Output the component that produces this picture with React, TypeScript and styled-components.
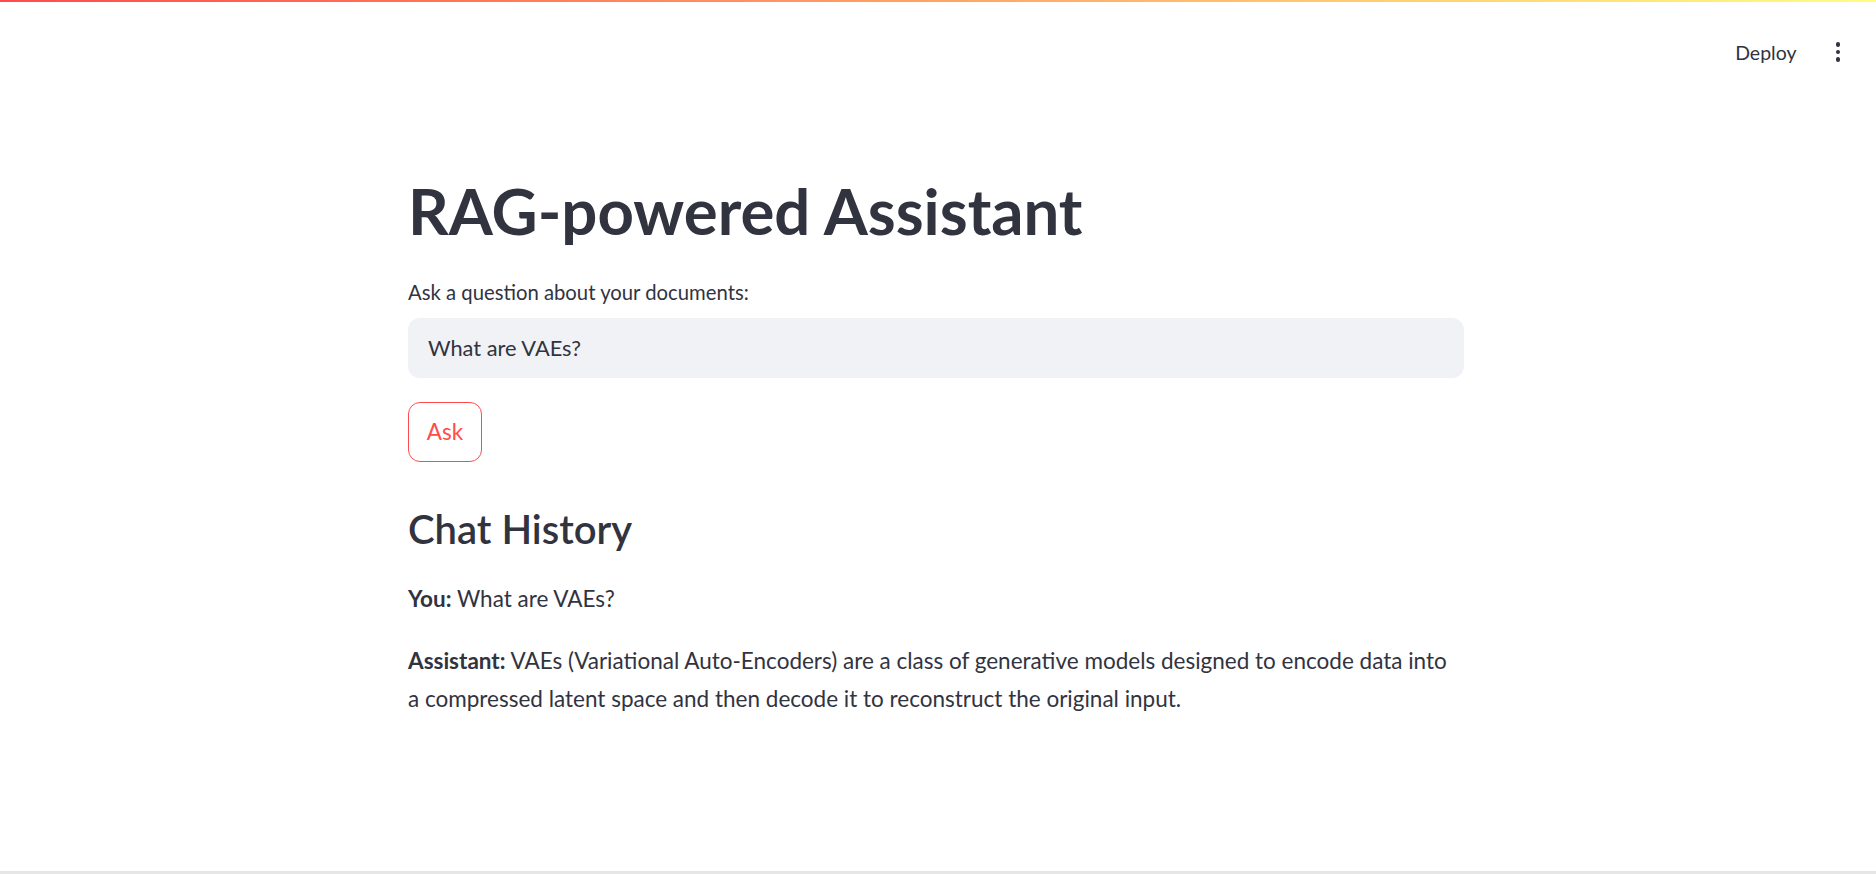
import React from "react";
import styled, { createGlobalStyle } from "styled-components";

const Global = createGlobalStyle`
  html, body { margin: 0; padding: 0; background: #ffffff; }
  body { font-family: Lato, "Noto Sans", sans-serif; color: #31333f; }
  * { box-sizing: border-box; }
`;

const Page = styled.div`
  position: relative;
  width: 100%;
  height: 874px;
  overflow: hidden;
  background: #ffffff;
  border-bottom: 3px solid #e6e6e6;
`;

const Decoration = styled.div`
  height: 2px;
  background: linear-gradient(90deg, rgb(255, 75, 75), rgb(255, 253, 128));
`;

const Header = styled.header`
  display: flex;
  justify-content: flex-end;
  align-items: center;
  gap: 39px;
  padding: 30px 36px 0 0;
  height: 70px;
`;

const DeployButton = styled.button`
  border: none;
  background: transparent;
  font-family: Lato, "Noto Sans", sans-serif;
  font-size: 19.5px;
  color: #31333f;
  padding: 0;
  cursor: pointer;
`;

const Kebab = styled.div`
  display: flex;
  flex-direction: column;
  gap: 3px;
  align-items: center;
`;

const Dot = styled.span`
  width: 4.5px;
  height: 4.5px;
  border-radius: 50%;
  background: #31333f;
`;

const Main = styled.main`
  width: 1056px;
  margin-left: calc(50% - 530px);
  padding-top: 101px;
  display: flex;
  flex-direction: column;
`;

const Title = styled.h1`
  margin: 0;
  font-size: 63.5px;
  font-weight: 700;
  line-height: 1.2;
  color: #31333f;
`;

const Label = styled.label`
  margin-top: 29px;
  font-size: 20.3px;
  line-height: 1.4;
  color: #31333f;
`;

const Input = styled.div`
  margin-top: 11px;
  height: 60px;
  border-radius: 12px;
  background: #f0f2f6;
  display: flex;
  align-items: center;
  padding: 0 20px;
  font-size: 21.8px;
  color: #31333f;
`;

const AskButton = styled.button`
  margin-top: 24px;
  align-self: flex-start;
  width: 74px;
  height: 60px;
  border: 1px solid #ff4b4b;
  border-radius: 12px;
  background: #ffffff;
  color: #ff4b4b;
  font-family: Lato, "Noto Sans", sans-serif;
  font-size: 22.5px;
  cursor: pointer;
`;

const SubTitle = styled.h3`
  margin: 43px 0 0;
  font-size: 40px;
  font-weight: 600;
  line-height: 1.2;
  color: #31333f;
`;

const Para = styled.p<{ $top: number }>`
  margin: ${(p) => p.$top}px 0 0;
  max-width: 1045px;
  font-size: 22.5px;
  line-height: 38px;
  color: #31333f;
`;

const Strong = styled.strong`
  font-weight: 700;
`;

export default function App() {
  return (
    <>
      <Global />
      <Page>
        <Decoration />
        <Header>
          <DeployButton>Deploy</DeployButton>
          <Kebab>
            <Dot />
            <Dot />
            <Dot />
          </Kebab>
        </Header>
        <Main>
          <Title>RAG-powered Assistant</Title>
          <Label>Ask a question about your documents:</Label>
          <Input>What are VAEs?</Input>
          <AskButton>Ask</AskButton>
          <SubTitle>Chat History</SubTitle>
          <Para $top={27}>
            <Strong>You:</Strong> What are VAEs?
          </Para>
          <Para $top={24}>
            <Strong>Assistant:</Strong> VAEs (Variational Auto-Encoders) are a class of generative models designed to encode data into a compressed latent space and then decode it to reconstruct the original input.
          </Para>
        </Main>
      </Page>
    </>
  );
}
